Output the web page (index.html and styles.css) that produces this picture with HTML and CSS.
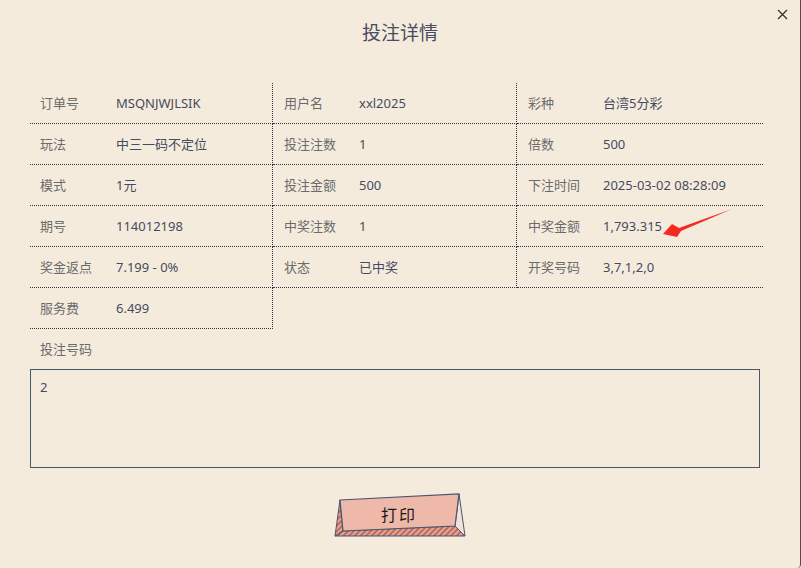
FILE: index.html
```html
<!DOCTYPE html>
<html lang="zh-CN">
<head>
  <meta charset="UTF-8">
  <title>投注详情</title>
  <link rel="stylesheet" href="styles.css">
</head>
<body>

<div class="dialog">
  <button class="close" aria-label="关闭">
    <svg width="11" height="11" viewBox="0 0 11 11"><path d="M1 1L10 10M10 1L1 10" stroke="#333" stroke-width="1.3"/></svg>
  </button>

  <h3 class="title">投注详情</h3>

  <div class="details">
    <div class="cell"><span class="label">订单号</span><span class="value">MSQNJWJLSIK</span></div>
    <div class="cell"><span class="label">用户名</span><span class="value">xxl2025</span></div>
    <div class="cell"><span class="label">彩种</span><span class="value">台湾5分彩</span></div>

    <div class="cell"><span class="label">玩法</span><span class="value">中三一码不定位</span></div>
    <div class="cell"><span class="label">投注注数</span><span class="value">1</span></div>
    <div class="cell"><span class="label">倍数</span><span class="value">500</span></div>

    <div class="cell"><span class="label">模式</span><span class="value">1元</span></div>
    <div class="cell"><span class="label">投注金额</span><span class="value">500</span></div>
    <div class="cell"><span class="label">下注时间</span><span class="value">2025-03-02 08:28:09</span></div>

    <div class="cell"><span class="label">期号</span><span class="value">114012198</span></div>
    <div class="cell"><span class="label">中奖注数</span><span class="value">1</span></div>
    <div class="cell"><span class="label">中奖金额</span><span class="value">1,793.315</span></div>

    <div class="cell"><span class="label">奖金返点</span><span class="value">7.199 - 0%</span></div>
    <div class="cell"><span class="label">状态</span><span class="value">已中奖</span></div>
    <div class="cell"><span class="label">开奖号码</span><span class="value">3,7,1,2,0</span></div>

    <div class="cell"><span class="label">服务费</span><span class="value">6.499</span></div>
  </div>

  <div class="numbers-label">投注号码</div>
  <div class="numbers">2</div>

  <div class="actions">
    <button class="print">
      <svg class="print-bg" width="132" height="44" viewBox="0 0 132 44">
        <defs>
          <pattern id="hatch" width="4" height="4" patternUnits="userSpaceOnUse" patternTransform="rotate(45)">
            <rect width="4" height="4" fill="#e9a594"/>
            <rect width="2" height="4" fill="#b86d60"/>
          </pattern>
        </defs>
        <polygon points="6,7 9,38 1,43" fill="url(#hatch)" stroke="#4a5570" stroke-width="1"/>
        <polygon points="9,38 121,33 131,43 1,43" fill="url(#hatch)" stroke="#4a5570" stroke-width="1"/>
        <polygon points="125,1 131,43 121,33" fill="#f3e1dc" stroke="#4a5570" stroke-width="1"/>
        <polygon points="6,7 125,1 121,33 9,38" fill="#efb9a9" stroke="#4a5570" stroke-width="1.2"/>
      </svg>
      <span class="print-text">打印</span>
    </button>
  </div>

  <svg class="arrow" width="801" height="568" viewBox="0 0 801 568">
    <polygon points="732,209 679,228 672,224 663,234 677,237 681,231" fill="#f5291f"/>
  </svg>
</div>

</body>
</html>
```

FILE: styles.css
```css
*, *::before, *::after {
  box-sizing: border-box;
}

body {
  margin: 0;
  font-family: "Noto Sans", "Noto Sans CJK SC", sans-serif;
  background-color: #f5ebdd;
}

.dialog {
  position: relative;
  width: 801px;
  height: 568px;
  background-color: #f5ebdd;
  border-right: 1px solid #5b4b46;
  border-bottom-right-radius: 4px;
  overflow: hidden;
}

.close {
  position: absolute;
  top: 9px;
  right: 12px;
  padding: 0;
  border: none;
  background: none;
  cursor: pointer;
  line-height: 0;
}

.title {
  margin: 0;
  height: 83px;
  padding-top: 19px;
  text-align: center;
  font-size: 19px;
  font-weight: normal;
  line-height: 26px;
  color: #4a4b5e;
  font-family: "Noto Sans CJK SC", sans-serif;
}

.details {
  display: grid;
  grid-template-columns: 243px 244px 246px;
  margin-left: 30px;
  width: 733px;
}

.cell {
  display: flex;
  align-items: center;
  height: 41px;
  padding-left: 10px;
  padding-bottom: 1px;
  border-bottom: 1px dotted #2e3448;
  font-size: 13px;
}

.cell:nth-child(3n+1),
.cell:nth-child(3n+2) {
  border-right: 1px dotted #2e3448;
}

.cell:nth-child(3n+2),
.cell:nth-child(3n) {
  padding-left: 11px;
}

.label {
  width: 76px;
  flex-shrink: 0;
  color: #6b6b6b;
  font-family: "Noto Sans CJK SC", sans-serif;
}

.cell:nth-child(3n+2) .label,
.cell:nth-child(3n) .label {
  width: 75px;
}

.value {
  color: #454b5e;
}

.numbers-label {
  margin: 10px 0 0 40px;
  height: 30px;
  font-size: 13px;
  color: #6b6b6b;
  font-family: "Noto Sans CJK SC", sans-serif;
}

.numbers {
  margin-left: 30px;
  width: 730px;
  height: 99px;
  padding: 8px 9px;
  border: 1px solid #4a5570;
  font-size: 13px;
  color: #454b5e;
}

.actions {
  display: flex;
  justify-content: center;
  padding-top: 25px;
}

.print {
  position: relative;
  width: 132px;
  height: 44px;
  padding: 0;
  border: none;
  background: none;
  cursor: pointer;
}

.print-bg {
  position: absolute;
  left: 0;
  top: 0;
}

.print-text {
  position: relative;
  display: block;
  padding-right: 2px;
  padding-bottom: 2px;
  font-size: 16px;
  letter-spacing: 2px;
  color: #1a1a1a;
  font-family: "Noto Sans CJK SC", sans-serif;
}

.arrow {
  position: absolute;
  left: 0;
  top: 0;
  pointer-events: none;
}
```
